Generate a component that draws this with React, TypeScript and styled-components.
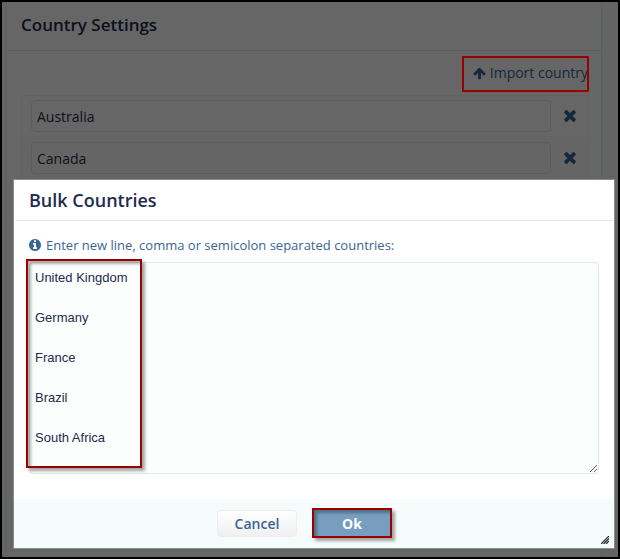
import React from "react";
import styled, { createGlobalStyle } from "styled-components";

const GlobalStyle = createGlobalStyle`
  *, *::before, *::after { box-sizing: border-box; }
  body {
    margin: 0;
    font-family: "Open Sans", sans-serif;
    font-size: 14px;
    color: #1f2b4d;
  }
`;

const Page = styled.div`
  position: relative;
  display: flex;
  height: 100vh;
  overflow: hidden;
  border: 2px solid #000;
  padding: 0 16px 0 4px;
  background: #f4fcfb;
`;

const Panel = styled.main`
  flex: 1;
  min-width: 0;
  background: #fff;
  border: 1px solid #e6eef2;
  border-width: 0 1px;
`;

const PanelHeader = styled.header`
  padding: 10px 14px 13px;
  border-bottom: 1px solid #dfe9f2;
`;

const Title = styled.h2<{ $large?: boolean }>`
  margin: 0;
  font-size: ${(p) => (p.$large ? 18 : 17)}px;
  line-height: 25px;
  font-weight: 600;
`;

const Toolbar = styled.div`
  display: flex;
  justify-content: flex-end;
  padding: 5px 12px 3px;
`;

const Marker = styled.span<{ $shadow?: boolean }>`
  position: absolute;
  inset: 0;
  z-index: 3;
  border: 2px solid #990000;
  pointer-events: none;
  box-shadow: ${(p) =>
    p.$shadow
      ? "3px 3px 3px rgba(0,0,0,.35), inset 3px 3px 3px rgba(0,0,0,.3)"
      : "none"};
`;

const ImportArea = styled.div`
  position: relative;
  height: 36px;
  padding: 0 1px 0 11px;
`;

const ImportLink = styled.a`
  display: flex;
  align-items: center;
  gap: 4px;
  line-height: 34px;
  color: #3a6496;
  text-decoration: none;
`;

const List = styled.ul`
  list-style: none;
  margin: 0 12px 0 14px;
  padding: 0;
  border: 1px solid #f6f6f6;
`;

const Row = styled.li`
  display: flex;
  align-items: center;
  gap: 12px;
  padding: 4px 11px 6px 9px;
  &:nth-child(even) { background: #fcfcfc; }
`;

const CountryInput = styled.input`
  flex: 1;
  min-width: 0;
  height: 32px;
  padding: 1px 5px 0;
  border: 1px solid #e0e6ec;
  border-radius: 4px;
  background: transparent;
  font: inherit;
  color: inherit;
`;

const RemoveButton = styled.button`
  display: flex;
  padding: 0;
  border: 0;
  background: none;
  color: #3a6496;
`;

const Backdrop = styled.div`
  position: absolute;
  inset: 0;
  z-index: 1;
  background: rgba(0, 0, 0, 0.6);
`;

const Dialog = styled.section`
  position: absolute;
  z-index: 2;
  left: 11px;
  right: 3px;
  bottom: 8px;
  border: 1px solid #8c8c8c;
  background: #fff;
`;

const DialogHeader = styled.header`
  margin: 0 1px;
  padding: 8px 14px 7px;
  border-bottom: 1px solid #dfe9f2;
`;

const DialogBody = styled.div`
  padding: 14px 15px 25px;
`;

const Hint = styled.label`
  display: flex;
  align-items: center;
  gap: 5px;
  margin-bottom: 7px;
  font-size: 13px;
  line-height: 20px;
  color: #3a6496;
`;

const Field = styled.div`
  position: relative;
  display: flex;
`;

const ListMarker = styled(Marker)`
  inset: -3px auto 6px -3px;
  width: 116px;
`;

const CountriesText = styled.textarea`
  flex: 1;
  height: 212px;
  margin: 0;
  padding: 5px;
  border: 1px solid #dfe9f2;
  border-radius: 4px;
  background: #fbfefd;
  font: 13px/20px "Liberation Sans", Arial, sans-serif;
  color: #1f2b4d;
  resize: both;
`;

const DialogFooter = styled.footer`
  position: relative;
  display: flex;
  justify-content: center;
  align-items: center;
  gap: 15px;
  padding: 9px 19px 10px 0;
  background: #f5fcfb;
`;

const Button = styled.button<{ $primary?: boolean }>`
  height: ${(p) => (p.$primary ? 30 : 27)}px;
  min-width: 80px;
  padding: 0 12px;
  border: 1px solid ${(p) => (p.$primary ? "#779dc0" : "#eee")};
  border-radius: ${(p) => (p.$primary ? 0 : 4)}px;
  background: ${(p) => (p.$primary ? "#779dc0" : "linear-gradient(#fff, #f0f0f0)")};
  color: ${(p) => (p.$primary ? "#fff" : "#3a6496")};
  font-family: inherit;
  font-size: 14px;
  font-weight: ${(p) => (p.$primary ? 700 : 600)};
`;

const MarkedButton = styled.div`
  position: relative;
  display: flex;
`;

const Icon = styled.svg`
  flex: none;
  fill: currentColor;
`;

const Grip = styled.svg`
  position: absolute;
  right: 5px;
  bottom: 4px;
`;

function ArrowUpIcon() {
  return (
    <Icon width="13" height="13" viewBox="0 96 1664 1664" aria-hidden="true">
      <path d="M1611 971q0 51-37 90l-75 75q-38 38-91 38-54 0-90-38l-294-293v704q0 52-37.5 84.5t-90.5 32.5h-128q-53 0-90.5-32.5t-37.5-84.5v-704l-294 293q-36 38-90 38t-90-38l-75-75q-38-38-38-90 0-53 38-91l651-651q35-37 90-37 54 0 91 37l651 651q37 39 37 91z" />
    </Icon>
  );
}

function RemoveIcon() {
  return (
    <Icon width="14" height="14" viewBox="0 256 1408 1408" aria-hidden="true">
      <path d="M1298 1322q0 40-28 68l-136 136q-28 28-68 28t-68-28l-294-294-294 294q-28 28-68 28t-68-28l-136-136q-28-28-28-68t28-68l294-294-294-294q-28-28-28-68t28-68l136-136q28-28 68-28t68 28l294 294 294-294q28-28 68-28t68 28l136 136q28 28 28 68t-28 68l-294 294 294 294q28 28 28 68z" />
    </Icon>
  );
}

function InfoIcon() {
  return (
    <Icon width="12" height="12" viewBox="0 128 1536 1536" aria-hidden="true">
      <path d="M1024 1376v-160q0-14-9-23t-23-9h-96v-512q0-14-9-23t-23-9h-320q-14 0-23 9t-9 23v160q0 14 9 23t23 9h96v320h-96q-14 0-23 9t-9 23v160q0 14 9 23t23 9h448q14 0 23-9t9-23zm-128-896v-160q0-14-9-23t-23-9h-192q-14 0-23 9t-9 23v160q0 14 9 23t23 9h192q14 0 23-9t9-23zm640 416q0 209-103 385.5t-279.5 279.5-385.5 103-385.5-103-279.5-279.5-103-385.5 103-385.5 279.5-279.5 385.5-103 385.5 103 279.5 279.5 103 385.5z" />
    </Icon>
  );
}

const countries = ["Australia", "Canada"];
const bulk = ["United Kingdom", "Germany", "France", "Brazil", "South Africa"];

export default function App() {
  return (
    <>
      <GlobalStyle />
      <Page>
        <Panel>
          <PanelHeader>
            <Title>Country Settings</Title>
          </PanelHeader>
          <Toolbar>
            <ImportArea>
              <ImportLink href="#import">
                <ArrowUpIcon />
                Import country
              </ImportLink>
              <Marker />
            </ImportArea>
          </Toolbar>
          <List>
            {countries.map((name) => (
              <Row key={name}>
                <CountryInput aria-label="Country" defaultValue={name} />
                <RemoveButton type="button" aria-label={`Remove ${name}`}>
                  <RemoveIcon />
                </RemoveButton>
              </Row>
            ))}
          </List>
        </Panel>
        <Backdrop />
        <Dialog role="dialog" aria-labelledby="bulk-title">
          <DialogHeader>
            <Title id="bulk-title" $large>Bulk Countries</Title>
          </DialogHeader>
          <DialogBody>
            <Hint htmlFor="bulk-countries">
              <InfoIcon />
              Enter new line, comma or semicolon separated countries:
            </Hint>
            <Field>
              <CountriesText
                id="bulk-countries"
                spellCheck={false}
                defaultValue={bulk.join("\n\n")}
              />
              <ListMarker $shadow />
            </Field>
          </DialogBody>
          <DialogFooter>
            <Button type="button">Cancel</Button>
            <MarkedButton>
              <Button type="button" $primary>Ok</Button>
              <Marker $shadow />
            </MarkedButton>
            <Grip width="8" height="8" viewBox="0 0 8 8" aria-hidden="true">
              <path d="M0 8L8 0M2.5 8L8 2.5M5 8L8 5" stroke="#222" strokeWidth="1.2" />
            </Grip>
          </DialogFooter>
        </Dialog>
      </Page>
    </>
  );
}
